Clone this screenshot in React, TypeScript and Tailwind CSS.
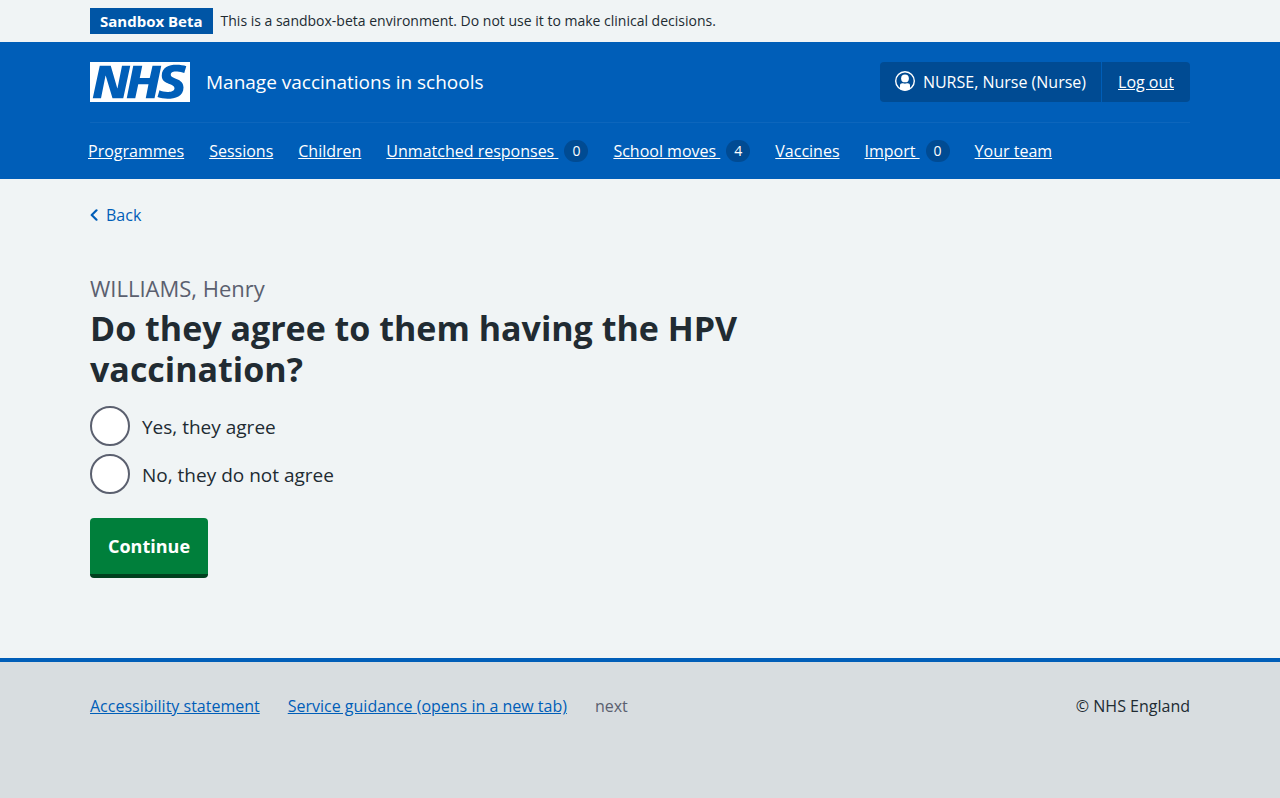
import React from "react";

type NavItem = { label: string; count?: number };

const navItems: NavItem[] = [
  { label: "Programmes" },
  { label: "Sessions" },
  { label: "Children" },
  { label: "Unmatched responses", count: 0 },
  { label: "School moves", count: 4 },
  { label: "Vaccines" },
  { label: "Import", count: 0 },
  { label: "Your team" },
];

const container = "mx-auto w-full max-w-[1164px] px-8";

function NhsLogo() {
  return (
    <svg className="block h-10 w-[100px] text-white" viewBox="0 0 200 80" role="img" aria-label="NHS">
      <path
        fill="currentColor"
        d="M200 0v80H0V0h200Zm-27.5 5.5c-14.5 0-29 5-29 22 0 10.2 7.7 13.5 14.7 16.3l.7.3c5.4 2 10.1 3.9 10.1 8.4 0 6.5-8.5 7.5-14 7.5s-12.5-1.5-16-3.5L135 70c5.5 2 13.5 3.5 20 3.5 15.5 0 32-4.5 32-22.5 0-19.5-25.5-16.5-25.5-25.5 0-5.5 5.5-6.5 12.5-6.5a35 35 0 0 1 14.5 3l4-13.5c-4.5-2-12-3-20-3Zm-131 2h-22l-14 65H22l9-45h.5l13.5 45h21.5l14-65H64l-9 45h-.5l-13-45Zm63 0h-18l-13 65h17l6-28H117l-5.5 28H129l13.5-65H125L119.5 32h-20l5-24.5Z"
      />
    </svg>
  );
}

function UserIcon() {
  return (
    <svg className="-mt-0.5 size-5 shrink-0" viewBox="0 0 20 20" aria-hidden="true">
      <circle cx="10" cy="10" r="9.3" fill="none" stroke="white" strokeWidth="1.4" />
      <circle cx="10" cy="7.4" r="3.9" fill="white" />
      <path fill="white" d="M5 18v-3.4c0-1.500.9-2.300 2.300-2.300 1.700 0 1.500.4 2.700.4s1-.4 2.700-.4c1.400 0 2.300.8 2.300 2.300V18a9.500 9.500 0 0 1-10 0Z" />
    </svg>
  );
}

function Radio({ id, label }: { id: string; label: string }) {
  return (
    <div className="flex items-center gap-3">
      <input
        type="radio"
        id={id}
        name="response"
        value={id}
        className="size-10 shrink-0 appearance-none rounded-full border-2 border-[#5b606f] bg-white checked:bg-[radial-gradient(circle,#212b32_10px,white_11px)]"
      />
      <label htmlFor={id} className="pt-0.5 text-[19px] leading-7">
        {label}
      </label>
    </div>
  );
}

export default function App() {
  return (
    <div className="flex min-h-screen flex-col bg-[#f0f4f5] font-['Open_Sans','Noto_Sans',sans-serif] text-base leading-6 text-[#212b32]">
      <div className="py-2">
        <div className={`${container} flex items-center gap-2`}>
          <strong className="bg-[#0055a5] px-2.5 py-px text-[15px] leading-6 font-bold text-white">Sandbox Beta</strong>
          <span className="text-sm">
            This is a sandbox-beta environment. Do not use it to make clinical decisions.
          </span>
        </div>
      </div>

      <header className="bg-[#005eb8] text-white">
        <div className={container}>
          <div className="flex flex-wrap items-center justify-between gap-4 py-5">
            <div className="flex items-center gap-4">
              <a href="#home" aria-label="NHS home">
                <NhsLogo />
              </a>
              <a href="#home" className="text-[19px] leading-7">
                Manage vaccinations in schools
              </a>
            </div>
            <div className="flex h-10 items-stretch rounded-sm bg-[#004b93]">
              <div className="flex items-center gap-2 border-r border-[#005eb8] px-[15px]">
                <UserIcon />
                <span>NURSE, Nurse (Nurse)</span>
              </div>
              <a href="#logout" className="flex items-center px-4 underline">
                Log out
              </a>
            </div>
          </div>
          <nav aria-label="Menu" className="border-t border-[#1a6ebf]/50">
            <ul className="-ml-0.5 flex flex-wrap gap-x-[25px] py-4">
              {navItems.map((item) => (
                <li key={item.label}>
                  <a href="#menu" className="flex items-center gap-1.5">
                    <span className="whitespace-pre underline">
                      {item.count === undefined ? item.label : `${item.label} `}
                    </span>
                    {item.count !== undefined && (
                      <span className="flex h-[22px] w-6 items-center justify-center rounded-full bg-[#004b93] text-sm">
                        {item.count}
                      </span>
                    )}
                  </a>
                </li>
              ))}
            </ul>
          </nav>
        </div>
      </header>

      <div className={`${container} flex-1 pt-6`}>
        <a href="#back" className="inline-flex items-center gap-2 text-[#005eb8]">
          <svg className="h-3 w-2" viewBox="0 0 8 12" fill="none" stroke="currentColor" strokeWidth="2.2" strokeLinecap="round" strokeLinejoin="round" aria-hidden="true">
            <path d="M6.500 1.300 1.700 6l4.800 4.700" />
          </svg>
          Back
        </a>
        <main className="pt-[45px] pb-16">
          <form className="max-w-[733px]" onSubmit={(e) => e.preventDefault()}>
            <fieldset>
              <legend className="mb-4">
                <h1 className="text-[34px] leading-[41px] font-bold">
                  <span className="mb-1 block text-[22px] leading-8 font-normal text-[#5b606f]">WILLIAMS, Henry</span>
                  Do they agree to them having the HPV vaccination?
                </h1>
              </legend>
              <div className="flex flex-col gap-2">
                <Radio id="yes" label="Yes, they agree" />
                <Radio id="no" label="No, they do not agree" />
              </div>
            </fieldset>
            <button
              type="submit"
              className="mt-6 h-[60px] rounded-sm border-b-4 border-[#00401e] bg-[#007f3b] px-[18px] text-[18px] leading-7 font-bold text-white"
            >
              Continue
            </button>
          </form>
        </main>
      </div>

      <footer className="border-t-4 border-[#005eb8] bg-[#d8dde0] pt-8 pb-20">
        <div className={`${container} flex flex-wrap justify-between gap-8`}>
          <ul className="flex flex-wrap gap-x-7 text-[#005eb8]">
            <li>
              <a href="#accessibility" className="underline">Accessibility statement</a>
            </li>
            <li>
              <a href="#guidance" className="underline">Service guidance (opens in a new tab)</a>
            </li>
            <li className="text-[#5b606f]">next</li>
          </ul>
          <p>© NHS England</p>
        </div>
      </footer>
    </div>
  );
}
